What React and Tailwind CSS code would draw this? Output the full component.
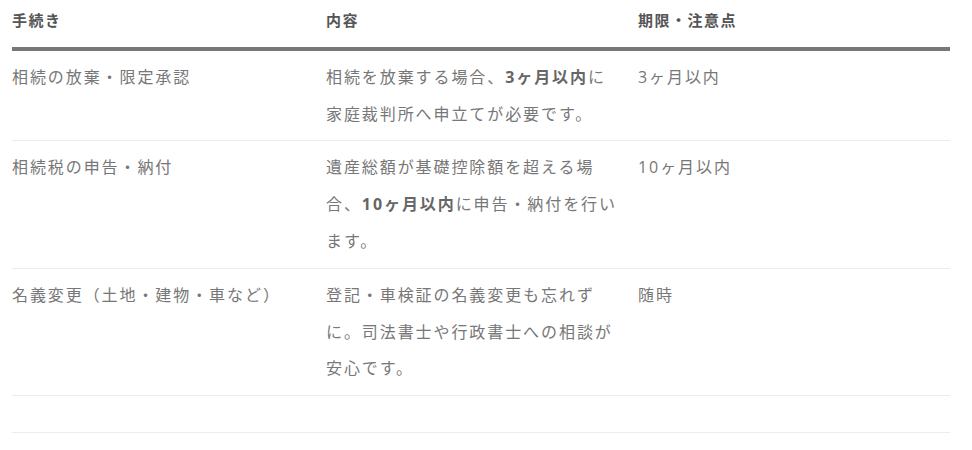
import React from "react";

const rows = [
  {
    name: "相続の放棄・限定承認",
    detail: (
      <>
        相続を放棄する場合、<strong className="font-bold text-[#666666]">3ヶ月以内</strong>に家庭裁判所へ申立てが必要です。
      </>
    ),
    limit: "3ヶ月以内",
  },
  {
    name: "相続税の申告・納付",
    detail: (
      <>
        遺産総額が基礎控除額を超える場合、<strong className="font-bold text-[#666666]">10ヶ月以内</strong>に申告・納付を行います。
      </>
    ),
    limit: "10ヶ月以内",
  },
  {
    name: "名義変更（土地・建物・車など）",
    detail: "登記・車検証の名義変更も忘れずに。司法書士や行政書士への相談が安心です。",
    limit: "随時",
  },
];

export default function App() {
  return (
    <div
      className="w-[972px] h-[450px] bg-white overflow-hidden"
      style={{ fontFamily: '"Open Sans", "Noto Sans CJK JP", sans-serif' }}
    >
      <div className="ml-[12px] w-[938px]">
        {/* header */}
        <div className="grid grid-cols-[314px_312px_312px] border-b-4 border-[#777777] text-[15px] font-bold text-[#555555] tracking-[0.1em] leading-[36.8px]">
          <div className="pt-[2px] pb-2 pr-[18px]">手続き</div>
          <div className="pt-[2px] pb-2 pr-[18px]">内容</div>
          <div className="pt-[2px] pb-2 pr-[18px]">期限・注意点</div>
        </div>

        {/* body rows */}
        {rows.map((r, i) => (
          <div
            key={i}
            className="grid grid-cols-[314px_312px_312px] border-b border-[#ececec] text-[16px] text-[#777777] tracking-[0.12em] leading-[36.8px]"
          >
            <div className="py-2 pr-[18px]">{r.name}</div>
            <div className="py-2 pr-[18px]">{r.detail}</div>
            <div className="py-2 pr-[18px]">{r.limit}</div>
          </div>
        ))}

        {/* empty trailing row */}
        <div className="h-[37px] border-b border-[#ececec]"></div>
      </div>
    </div>
  );
}
